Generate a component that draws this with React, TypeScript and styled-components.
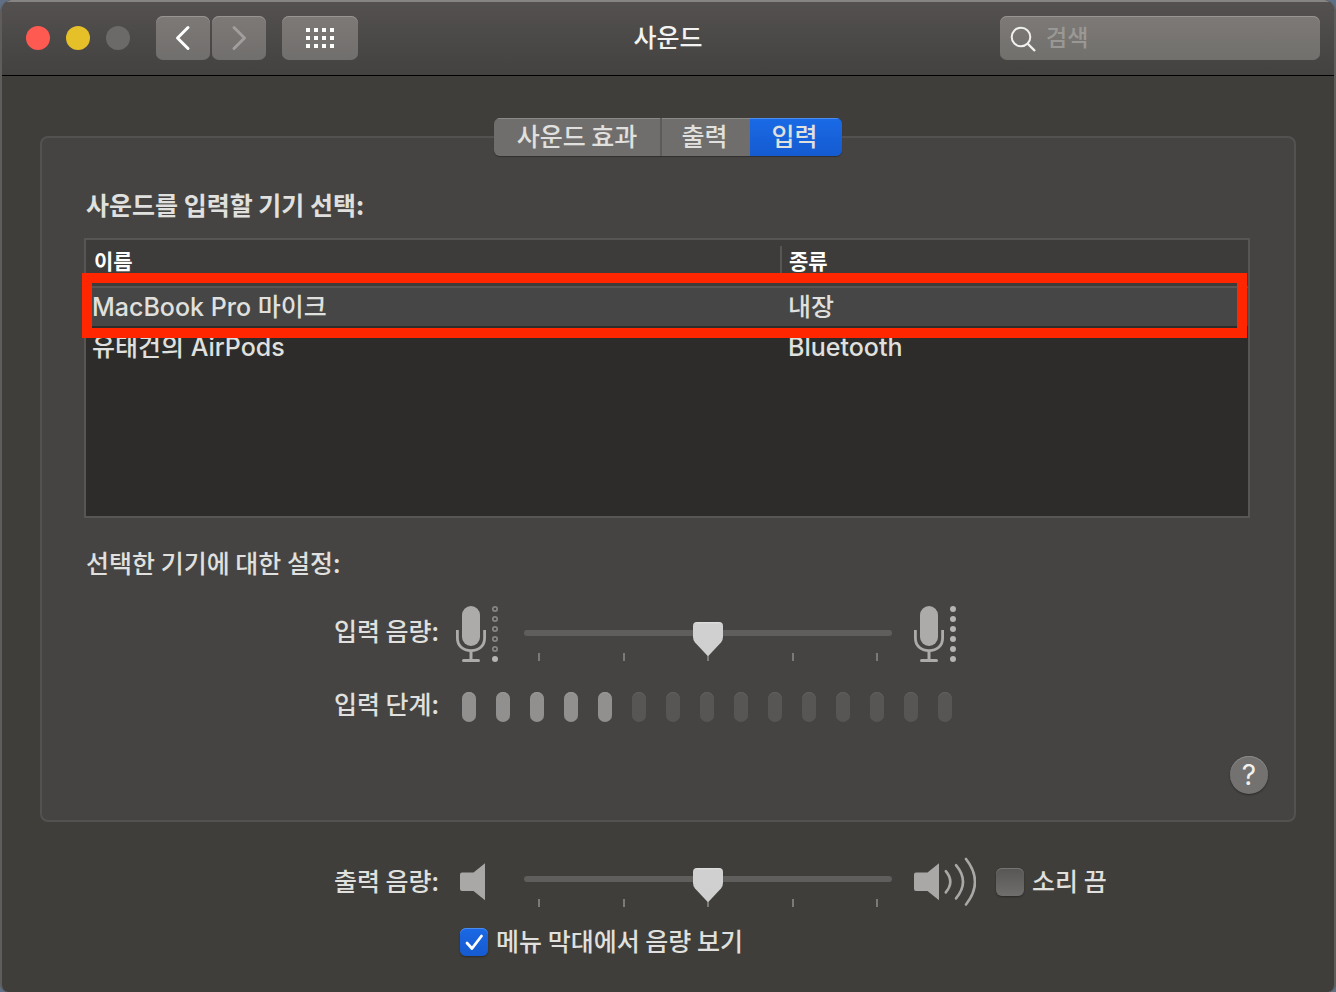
import React, { useState } from "react";
import styled, { createGlobalStyle } from "styled-components";

const GlobalStyle = createGlobalStyle`
  *, *::before, *::after { box-sizing: border-box; }
  body {
    margin: 0;
    background: #5f6f86;
    font-family: "Noto Sans CJK KR", sans-serif;
    font-size: 25px;
    font-weight: 500;
    line-height: 36px;
    color: #e0e0df;
  }
  button, input { font: inherit; color: inherit; }
`;

const Window = styled.main`
  display: flex;
  flex-direction: column;
  min-height: 100vh;
  border: solid #5e5d5b;
  border-width: 0 2px;
  border-radius: 12px 12px 8px 8px;
  overflow: hidden;
  background: #3f3e3b;
`;

const TitleBar = styled.header`
  display: grid;
  grid-template-columns: 1fr auto 1fr;
  align-items: center;
  padding: 16px 14px 15px;
  border-bottom: 1px solid #000;
  background: linear-gradient(#545150, #434240);
  box-shadow: inset 0 2px #868583;
`;

const Controls = styled.div`
  display: flex;
  align-items: center;
  padding-left: 10px;
`;

const Lights = styled.div`
  display: flex;
  gap: 16px;
  margin-right: 26px;
`;

const Light = styled.button<{ $color: string }>`
  width: 24px;
  height: 24px;
  padding: 0;
  border: 0;
  border-radius: 50%;
  background: ${(p) => p.$color};
`;

const ToolButton = styled.button<{ $wide?: boolean }>`
  display: flex;
  align-items: center;
  justify-content: center;
  width: ${(p) => (p.$wide ? 76 : 54)}px;
  height: 44px;
  margin-left: ${(p) => (p.$wide ? 14 : 0)}px;
  margin-right: 2px;
  padding: 0;
  border: 0;
  border-radius: 7px;
  background: linear-gradient(#7d7977, #716f6d);
  box-shadow: inset 0 1px #979492;
`;

const Title = styled.h1`
  margin: 0;
  padding-bottom: 4px;
  font-size: 25px;
  font-weight: 500;
  color: #f3f3f2;
`;

const SearchBox = styled.label`
  display: flex;
  align-items: center;
  justify-self: end;
  gap: 8px;
  width: 320px;
  height: 44px;
  padding-left: 10px;
  border-radius: 7px;
  background: linear-gradient(#7d7977, #71706d);
  box-shadow: inset 0 1px #979492;
`;

const SearchInput = styled.input`
  flex: 1;
  min-width: 0;
  height: 40px;
  padding: 0 0 4px;
  border: 0;
  outline: 0;
  background: transparent;
  font-size: 23px;
  &::placeholder { color: #9a9895; opacity: 1; }
`;

const Body = styled.div`
  padding: 42px 38px 28px;
`;

const Tabs = styled.div`
  position: relative;
  z-index: 1;
  display: flex;
  width: max-content;
  margin: 0 auto -20px;
  border-radius: 6px;
  overflow: hidden;
  box-shadow: 0 1px 1px rgba(0, 0, 0, 0.3);
`;

const Tab = styled.button<{ $active: boolean; $width: number; $divided?: boolean }>`
  width: ${(p) => p.$width}px;
  height: 38px;
  padding: ${(p) => (p.$divided ? "0 0 4px" : "0 3px 4px 0")};
  border: 0;
  border-right: ${(p) => (p.$divided ? "2px solid #5d5b5a" : "0")};
  background: ${(p) => (p.$active ? "linear-gradient(#1a6ae6, #145bd0)" : "#706e6d")};
  box-shadow: inset 0 1px ${(p) => (p.$active ? "#4b8cf0" : "#8c8a89")};
  line-height: 34px;
`;

const Panel = styled.section`
  padding: 50px 44px 26px 42px;
  border: 2px solid #535250;
  border-radius: 8px;
  background: #454442;
`;

const Heading = styled.h2<{ $bold?: boolean }>`
  margin: 0 0 0 2px;
  padding-bottom: 4px;
  font-size: 25px;
  font-weight: ${(p) => (p.$bold ? 700 : 500)};
  line-height: 32px;
`;

const TableFrame = styled.div`
  position: relative;
  height: 280px;
  margin: 14px 0 28px;
  border: 2px solid #575655;
  background: #2d2c2a;
`;

const DeviceTable = styled.table`
  width: 100%;
  table-layout: fixed;
  border-collapse: separate;
  border-spacing: 0;
`;

const HeadCell = styled.th`
  height: 48px;
  padding: 6px 0 0;
  border-bottom: 2px solid #575655;
  background: #3d3c3a;
  text-align: left;
  vertical-align: top;
  font-size: 21px;
  font-weight: 700;
  line-height: 28px;
  color: #fff;
`;

const HeadLabel = styled.span<{ $divided?: boolean }>`
  display: block;
  height: 34px;
  padding-left: ${(p) => (p.$divided ? 7 : 8)}px;
  border-left: ${(p) => (p.$divided ? "2px solid #575655" : "0")};
`;

const DeviceRow = styled.tr<{ $selected?: boolean }>`
  background: ${(p) => (p.$selected ? "#464646" : "transparent")};
`;

const Cell = styled.td`
  height: 40px;
  padding: 0 0 0 6px;
  border-bottom: 2px solid #2d2c2a;
  font-family: Inter, "Noto Sans CJK KR", sans-serif;
  &:last-child { padding-left: 8px; }
`;

const Highlight = styled.div`
  position: absolute;
  top: 33px;
  left: -4px;
  right: 1px;
  height: 65px;
  border: 10px solid #ff2600;
  pointer-events: none;
`;

const Form = styled.div`
  display: grid;
  grid-template-columns: 1fr 68px 368px 1fr;
  align-items: center;
  padding-left: 12px;
`;

/* The panel's uneven side padding is evened out so both forms share one axis. */
const PanelForm = styled(Form)`
  margin: 23px -2px 0 0;
  row-gap: 26px;
`;

const OutputForm = styled(Form)`
  grid-template-rows: 62px auto;
  margin: 29px -2px 0 0;
  padding-left: 10px;
  row-gap: 11px;
`;

const FieldLabel = styled.label<{ $raised?: boolean }>`
  padding: 0 17px ${(p) => (p.$raised ? 8 : 4)}px 0;
  line-height: 28px;
  text-align: right;
`;

const SliderBox = styled.div`
  display: grid;
  align-self: start;
  height: 56px;
  padding-top: 17px;
`;

const Ticks = styled.div`
  grid-area: 1 / 1;
  display: flex;
  justify-content: space-between;
  align-self: end;
  padding: 0 14px;
`;

const Tick = styled.span`
  width: 2px;
  height: 8px;
  background: #7b7a78;
`;

const Range = styled.input`
  grid-area: 1 / 1;
  appearance: none;
  width: 100%;
  height: 22px;
  margin: 0;
  background: transparent;
  z-index: 1;
  &::-webkit-slider-runnable-track {
    height: 6px;
    border-radius: 3px;
    background: #5f5e5d;
  }
  &::-webkit-slider-thumb {
    appearance: none;
    width: 30px;
    height: 34px;
    margin-top: -8px;
    background: linear-gradient(#e2e2e2 0, #d0d0d0 2px, #cfcfcf);
    clip-path: path("M4 0H26Q30 0 30 4V15Q30 18 28 20.5L16 33.3Q15 34.3 14 33.3L2 20.5Q0 18 0 15V4Q0 0 4 0Z");
  }
`;

const EndIcons = styled.div`
  display: flex;
  align-items: center;
  gap: 20px;
  padding-left: 22px;
`;

const Meter = styled.div`
  grid-column: 2 / -1;
  display: flex;
  gap: 20px;
  padding-left: 6px;
`;

const MeterBar = styled.span<{ $on: boolean }>`
  width: 14px;
  height: 30px;
  border-radius: 7px;
  background: ${(p) => (p.$on ? "#91908f" : "#575654")};
  box-shadow: inset 0 1px 1px ${(p) => (p.$on ? "#9a9998" : "#62615f")};
`;

const HelpButton = styled.button`
  display: block;
  width: 38px;
  height: 38px;
  margin: 31px -18px 0 auto;
  padding: 0;
  border: 0;
  border-radius: 50%;
  background: #737270;
  box-shadow: inset 0 1px #8b8a88, 0 1px 2px rgba(0, 0, 0, 0.4);
  font-family: Inter, sans-serif;
  font-size: 28px;
  font-weight: 400;
  line-height: 38px;
  color: #f0f0ef;
`;

const CheckLabel = styled.label<{ $row?: boolean }>`
  display: flex;
  align-items: center;
  gap: 8px;
  grid-column: ${(p) => (p.$row ? "2 / -1" : "auto")};
  padding-left: ${(p) => (p.$row ? 4 : 0)}px;
  white-space: nowrap;
`;

const CheckText = styled.span`
  padding-bottom: 4px;
  line-height: 32px;
`;

const CheckSlot = styled.span`
  display: grid;
  flex: none;
  width: 28px;
  height: 28px;
  & > * { grid-area: 1 / 1; }
  svg { pointer-events: none; z-index: 1; }
`;

const Checkbox = styled.input`
  appearance: none;
  width: 28px;
  height: 28px;
  margin: 0;
  border-radius: 6px;
  background: linear-gradient(#575654, #6f6e6c);
  box-shadow: inset 0 1px #767573, 0 1px 2px rgba(0, 0, 0, 0.35);
  &:checked {
    background: linear-gradient(#1b69e5, #155bd0);
    box-shadow: inset 0 1px #4b8cf0, 0 1px 2px rgba(0, 0, 0, 0.35);
  }
`;

const IconSlot = styled.span<{ $inset?: boolean }>`
  display: flex;
  padding-left: ${(p) => (p.$inset ? 4 : 0)}px;
`;

function MicIcon({ full }: { full?: boolean }) {
  return (
    <svg width="43" height="58" viewBox="0 0 43 58" fill="none" aria-hidden="true">
      <rect x="6" y="1" width="18" height="40" rx="9" fill="#acabaa" />
      <path d="M1.4 25v8c0 8 5.6 12.6 13.6 12.6S28.600 41 28.600 33v-8" stroke="#acabaa" strokeWidth="2.800" />
      <path d="M15 46v9" stroke="#acabaa" strokeWidth="3" />
      <path d="M7.500 55.500h15" stroke="#acabaa" strokeWidth="3" strokeLinecap="round" />
      {[4, 14, 24, 34, 44, 54].map((y) =>
        full || y === 54 ? (
          <circle key={y} cx="39" cy={y} r="3" fill="#b5b4b3" />
        ) : (
          <circle key={y} cx="39" cy={y} r="2.200" stroke="#878685" strokeWidth="1.700" />
        ),
      )}
    </svg>
  );
}

function SpeakerIcon({ loud }: { loud?: boolean }) {
  return (
    <svg width={loud ? 62 : 26} height="50" viewBox={loud ? "0 0 62 50" : "0 0 26 50"} fill="none" aria-hidden="true">
      <path d="M2 15.500h11.500L25 6.200v37L13.500 34H2q-2 0-2-2V17.500q0-2 2-2Z" fill="#a9a8a7" />
      {loud && (
        <g stroke="#a9a8a7" strokeWidth="2.600" strokeLinecap="round">
          <path d="M31.800 14.200q9 10.600 0 21.200" />
          <path d="M42 8.200q14 16.600 0 33.200" />
          <path d="M52 2q18 23 0 45.500" />
        </g>
      )}
    </svg>
  );
}

function Slider({ id }: { id: string }) {
  const [value, setValue] = useState(50);
  return (
    <SliderBox>
      <Ticks>
        {[0, 1, 2, 3, 4].map((n) => (
          <Tick key={n} />
        ))}
      </Ticks>
      <Range id={id} type="range" value={value} onChange={(e) => setValue(Number(e.target.value))} />
    </SliderBox>
  );
}

const tabs = [
  { name: "사운드 효과", width: 168, divided: true },
  { name: "출력", width: 88 },
  { name: "입력", width: 92 },
];

const devices = [
  { name: "MacBook Pro 마이크", kind: "내장" },
  { name: "유태건의 AirPods", kind: "Bluetooth" },
];

export default function App() {
  const [active, setActive] = useState("입력");
  return (
    <>
      <GlobalStyle />
      <Window>
        <TitleBar>
          <Controls>
            <Lights>
              <Light $color="#ff5a52" aria-label="닫기" />
              <Light $color="#e6c029" aria-label="최소화" />
              <Light $color="#6b6a69" aria-label="확대" />
            </Lights>
            <ToolButton aria-label="뒤로">
              <svg width="16" height="26" viewBox="0 0 16 26" fill="none" stroke="#fff" strokeWidth="3" strokeLinecap="round" strokeLinejoin="round">
                <path d="M13 2.500 2.500 13 13 23.500" />
              </svg>
            </ToolButton>
            <ToolButton aria-label="앞으로">
              <svg width="16" height="26" viewBox="0 0 16 26" fill="none" stroke="#a19f9d" strokeWidth="3" strokeLinecap="round" strokeLinejoin="round">
                <path d="M3 2.500 13.500 13 3 23.500" />
              </svg>
            </ToolButton>
            <ToolButton $wide aria-label="모두 보기">
              <svg width="28" height="20" viewBox="0 0 28 20" fill="#fff">
                {[0, 8, 16].map((y) => [0, 8, 16, 24].map((x) => <rect key={`${x}-${y}`} x={x} y={y} width="4" height="4" />))}
              </svg>
            </ToolButton>
          </Controls>
          <Title>사운드</Title>
          <SearchBox>
            <svg width="28" height="28" viewBox="0 0 28 28" fill="none" stroke="#f0f0ef" strokeWidth="2" aria-hidden="true">
              <circle cx="11" cy="13" r="9.300" />
              <path d="m17.500 19.500 7.500 7.500" strokeWidth="2.400" />
            </svg>
            <SearchInput type="search" placeholder="검색" aria-label="검색" />
          </SearchBox>
        </TitleBar>
        <Body>
          <Tabs role="tablist">
            {tabs.map((t) => (
              <Tab
                key={t.name}
                role="tab"
                aria-selected={t.name === active}
                $active={t.name === active}
                $width={t.width}
                $divided={t.divided}
                onClick={() => setActive(t.name)}
              >
                {t.name}
              </Tab>
            ))}
          </Tabs>
          <Panel>
            <Heading $bold>사운드를 입력할 기기 선택:</Heading>
            <TableFrame>
              <DeviceTable>
                <colgroup>
                  <col />
                  <col style={{ width: 468 }} />
                </colgroup>
                <thead>
                  <tr>
                    <HeadCell scope="col"><HeadLabel>이름</HeadLabel></HeadCell>
                    <HeadCell scope="col"><HeadLabel $divided>종류</HeadLabel></HeadCell>
                  </tr>
                </thead>
                <tbody>
                  {devices.map((d, i) => (
                    <DeviceRow key={d.name} $selected={i === 0}>
                      <Cell>{d.name}</Cell>
                      <Cell>{d.kind}</Cell>
                    </DeviceRow>
                  ))}
                </tbody>
              </DeviceTable>
              <Highlight />
            </TableFrame>
            <Heading>선택한 기기에 대한 설정:</Heading>
            <PanelForm>
              <FieldLabel $raised htmlFor="input-volume">입력 음량:</FieldLabel>
              <IconSlot><MicIcon /></IconSlot>
              <Slider id="input-volume" />
              <EndIcons><MicIcon full /></EndIcons>
              <FieldLabel $raised as="span" id="input-level">입력 단계:</FieldLabel>
              <Meter role="meter" aria-labelledby="input-level" aria-valuemin={0} aria-valuemax={15} aria-valuenow={5}>
                {Array.from({ length: 15 }, (_, i) => (
                  <MeterBar key={i} $on={i < 5} />
                ))}
              </Meter>
            </PanelForm>
            <HelpButton aria-label="도움말">?</HelpButton>
          </Panel>
          <OutputForm>
            <FieldLabel htmlFor="output-volume">출력 음량:</FieldLabel>
            <IconSlot $inset><SpeakerIcon /></IconSlot>
            <Slider id="output-volume" />
            <EndIcons>
              <SpeakerIcon loud />
              <CheckLabel>
                <CheckSlot><Checkbox type="checkbox" /></CheckSlot>
                <CheckText>소리 끔</CheckText>
              </CheckLabel>
            </EndIcons>
            <CheckLabel $row>
              <CheckSlot>
                <Checkbox type="checkbox" defaultChecked />
                <svg width="28" height="28" viewBox="0 0 28 28" fill="none" stroke="#fff" strokeWidth="2.800" strokeLinecap="round" strokeLinejoin="round">
                  <path d="m7 15 5 5.500L21.500 8" />
                </svg>
              </CheckSlot>
              <CheckText>메뉴 막대에서 음량 보기</CheckText>
            </CheckLabel>
          </OutputForm>
        </Body>
      </Window>
    </>
  );
}
